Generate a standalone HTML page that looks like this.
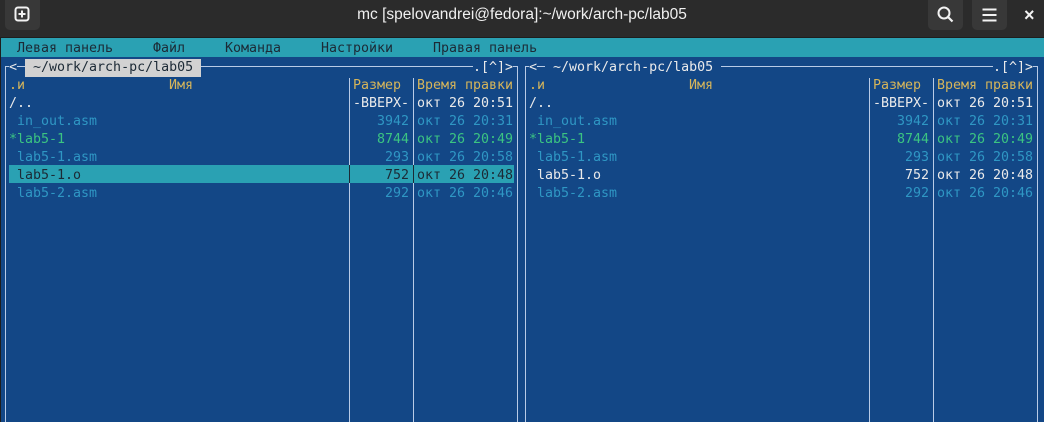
<!DOCTYPE html>
<html><head><meta charset="utf-8"><style>
*{margin:0;padding:0;box-sizing:border-box}
html,body{width:1044px;height:422px;overflow:hidden}
body{background:#1e1e1e;position:relative;font-family:"Liberation Sans",sans-serif}
.title{position:absolute;left:0;top:0;width:1044px;height:37px;background:#2b2b2b}
.ttl{position:absolute;left:0;width:1044px;top:6px;text-align:center;color:#f0f0f0;font-size:15.5px}
.btn{position:absolute;top:0;width:35px;height:30px;background:#383838;border-radius:0 0 5px 5px}
.term{position:absolute;left:1px;top:38px;width:1043px;height:384px;background:#134786;overflow:hidden}
.menu{position:absolute;left:0;top:0;width:1043px;height:19px;background:#2aa1b3}
.t{position:absolute;font-family:"DejaVu Sans Mono",monospace;font-size:13.3px;line-height:18px;white-space:pre;height:18px;margin-top:2px}
.v{position:absolute;width:1px;background:#b9cbe6}
.h{position:absolute;height:1px;background:#b9cbe6}
.y{color:#d6b55a}.w{color:#eaeaea}.c{color:#2f97c4}.g{color:#3bc482}.k{color:#1c2a36}
</style></head><body>
<div class="title">
 <div class="btn" style="left:5px"><svg width="35" height="30" viewBox="0 0 35 30"><rect x="10.5" y="7.5" width="13" height="13" rx="2.5" fill="none" stroke="#f2f2f2" stroke-width="2"/><path d="M17 10.5v7M13.5 14h7" stroke="#f2f2f2" stroke-width="2"/></svg></div>
 <div class="ttl">mc [spelovandrei@fedora]:~/work/arch-pc/lab05</div>
 <div class="btn" style="left:928px"><svg width="35" height="30" viewBox="0 0 35 30"><circle cx="16" cy="13" r="5.5" fill="none" stroke="#f2f2f2" stroke-width="2"/><path d="M20 17l4.5 4.5" stroke="#f2f2f2" stroke-width="2.2"/></svg></div>
 <div class="btn" style="left:972px"><svg width="35" height="30" viewBox="0 0 35 30"><path d="M10.5 9.5h14M10.5 15h14M10.5 20.5h14" stroke="#f2f2f2" stroke-width="2"/></svg></div>
 <div style="position:absolute;left:1024px;top:5px;color:#f2f2f2;font-size:18px;font-weight:bold">×</div>
</div>
<div class="term">
 <div class="menu"></div>
 <div class="t k" style="left:16px;top:0px">Левая панель</div>
 <div class="t k" style="left:152px;top:0px">Файл</div>
 <div class="t k" style="left:224px;top:0px">Команда</div>
 <div class="t k" style="left:320px;top:0px">Настройки</div>
 <div class="t k" style="left:432px;top:0px">Правая панель</div>

 <div class="h" style="left:4px;top:28px;width:513px"></div>
 <div class="h" style="left:524px;top:28px;width:513px"></div>
 <div class="v" style="left:4px;top:28px;height:360px"></div>
 <div class="v" style="left:516px;top:28px;height:360px"></div>
 <div class="v" style="left:524px;top:28px;height:360px"></div>
 <div class="v" style="left:1036px;top:28px;height:360px"></div>
 <div class="v" style="left:348px;top:40px;height:350px"></div>
 <div class="v" style="left:412px;top:40px;height:350px"></div>
 <div class="v" style="left:868px;top:40px;height:350px"></div>
 <div class="v" style="left:932px;top:40px;height:350px"></div>

 <div class="t w" style="left:8px;top:19px;background:#134786">&lt;</div>
 <div class="t k" style="left:24px;top:19px;background:#d2d2d2"> ~/work/arch-pc/lab05 </div>
 <div class="t w" style="left:472px;top:19px;background:#134786">.[^]&gt;</div>
 <div class="t w" style="left:528px;top:19px;background:#134786">&lt;</div>
 <div class="t w" style="left:544px;top:19px;background:#134786"> ~/work/arch-pc/lab05 </div>
 <div class="t w" style="left:992px;top:19px;background:#134786">.[^]&gt;</div>

 <div style="position:absolute;left:8px;top:127px;width:505px;height:18px;background:#2aa1b3"></div>
 <div style="position:absolute;left:348px;top:127px;width:1px;height:18px;background:#1c2a36"></div>
 <div style="position:absolute;left:412px;top:127px;width:1px;height:18px;background:#1c2a36"></div>

 <div class="t y" style="left:8px;top:37px">.и</div>
 <div class="t y" style="left:168px;top:37px">Имя</div>
 <div class="t y" style="left:352px;top:37px">Размер</div>
 <div class="t y" style="left:416px;top:37px">Время правки</div>
 <div class="t w" style="left:8px;top:55px">/..</div>
 <div class="t w" style="left:352px;top:55px">-ВВЕРХ-</div>
 <div class="t w" style="left:416px;top:55px">окт 26 20:51</div>
 <div class="t c" style="left:8px;top:73px"> in_out.asm</div>
 <div class="t c" style="left:352px;top:73px">   3942</div>
 <div class="t c" style="left:416px;top:73px">окт 26 20:31</div>
 <div class="t g" style="left:8px;top:91px">*lab5-1</div>
 <div class="t g" style="left:352px;top:91px">   8744</div>
 <div class="t g" style="left:416px;top:91px">окт 26 20:49</div>
 <div class="t c" style="left:8px;top:109px"> lab5-1.asm</div>
 <div class="t c" style="left:352px;top:109px">    293</div>
 <div class="t c" style="left:416px;top:109px">окт 26 20:58</div>
 <div class="t k" style="left:8px;top:127px"> lab5-1.o</div>
 <div class="t k" style="left:352px;top:127px">    752</div>
 <div class="t k" style="left:416px;top:127px">окт 26 20:48</div>
 <div class="t c" style="left:8px;top:145px"> lab5-2.asm</div>
 <div class="t c" style="left:352px;top:145px">    292</div>
 <div class="t c" style="left:416px;top:145px">окт 26 20:46</div>

 <div class="t y" style="left:528px;top:37px">.и</div>
 <div class="t y" style="left:688px;top:37px">Имя</div>
 <div class="t y" style="left:872px;top:37px">Размер</div>
 <div class="t y" style="left:936px;top:37px">Время правки</div>
 <div class="t w" style="left:528px;top:55px">/..</div>
 <div class="t w" style="left:872px;top:55px">-ВВЕРХ-</div>
 <div class="t w" style="left:936px;top:55px">окт 26 20:51</div>
 <div class="t c" style="left:528px;top:73px"> in_out.asm</div>
 <div class="t c" style="left:872px;top:73px">   3942</div>
 <div class="t c" style="left:936px;top:73px">окт 26 20:31</div>
 <div class="t g" style="left:528px;top:91px">*lab5-1</div>
 <div class="t g" style="left:872px;top:91px">   8744</div>
 <div class="t g" style="left:936px;top:91px">окт 26 20:49</div>
 <div class="t c" style="left:528px;top:109px"> lab5-1.asm</div>
 <div class="t c" style="left:872px;top:109px">    293</div>
 <div class="t c" style="left:936px;top:109px">окт 26 20:58</div>
 <div class="t w" style="left:528px;top:127px"> lab5-1.o</div>
 <div class="t w" style="left:872px;top:127px">    752</div>
 <div class="t w" style="left:936px;top:127px">окт 26 20:48</div>
 <div class="t c" style="left:528px;top:145px"> lab5-2.asm</div>
 <div class="t c" style="left:872px;top:145px">    292</div>
 <div class="t c" style="left:936px;top:145px">окт 26 20:46</div>
</div>
</body></html>
